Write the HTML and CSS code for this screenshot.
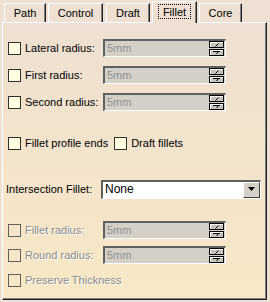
FILE: index.html
```html
<!DOCTYPE html>
<html>
<head>
    <title>Fillet</title>
    <link rel="stylesheet" href="styles.css">
</head>
<body>
<div id="window">
    <div id="tabs">
        <div class="tab tab-path">Path</div>
        <div class="tab tab-control">Control</div>
        <div class="tab tab-draft">Draft</div>
        <div class="tab tab-fillet active"><span class="focus">Fillet</span></div>
        <div class="tab tab-core">Core</div>
    </div>
    <div id="panel">
        <div class="row">
            <span class="check"></span>
            <span class="label">Lateral radius:</span>
            <div class="spin">
                <div class="spin-field">5mm</div>
                <div class="spin-buttons">
                    <div class="spin-btn"><svg width="13" height="5" viewBox="0 0 13 5"><path d="M5.5 4.5 L8.5 1.5" stroke="#000" fill="none"/></svg></div>
                    <div class="spin-btn"><svg width="13" height="5" viewBox="0 0 13 5"><path d="M3 1.5 H10 M8.5 1.5 L6.5 4" stroke="#000" fill="none"/></svg></div>
                </div>
            </div>
        </div>
        <div class="row">
            <span class="check"></span>
            <span class="label">First radius:</span>
            <div class="spin">
                <div class="spin-field">5mm</div>
                <div class="spin-buttons">
                    <div class="spin-btn"><svg width="13" height="5" viewBox="0 0 13 5"><path d="M5.5 4.5 L8.5 1.5" stroke="#000" fill="none"/></svg></div>
                    <div class="spin-btn"><svg width="13" height="5" viewBox="0 0 13 5"><path d="M3 1.5 H10 M8.5 1.5 L6.5 4" stroke="#000" fill="none"/></svg></div>
                </div>
            </div>
        </div>
        <div class="row">
            <span class="check"></span>
            <span class="label">Second radius:</span>
            <div class="spin">
                <div class="spin-field">5mm</div>
                <div class="spin-buttons">
                    <div class="spin-btn"><svg width="13" height="5" viewBox="0 0 13 5"><path d="M5.5 4.5 L8.5 1.5" stroke="#000" fill="none"/></svg></div>
                    <div class="spin-btn"><svg width="13" height="5" viewBox="0 0 13 5"><path d="M3 1.5 H10 M8.5 1.5 L6.5 4" stroke="#000" fill="none"/></svg></div>
                </div>
            </div>
        </div>

        <div class="row row-options">
            <span class="check"></span>
            <span class="label-inline">Fillet profile ends</span>
            <span class="check check-gap"></span>
            <span class="label-inline">Draft fillets</span>
        </div>

        <div class="row row-combo">
            <span class="label label-combo">Intersection Fillet:</span>
            <div class="combo">
                <div class="combo-value">None</div>
                <div class="combo-btn"><svg width="9" height="5" viewBox="0 0 9 5"><path d="M1 0 H8 L4.5 4 Z" fill="#000"/></svg></div>
            </div>
        </div>

        <div class="row row-fillet disabled">
            <span class="check"></span>
            <span class="label">Fillet radius:</span>
            <div class="spin">
                <div class="spin-field">5mm</div>
                <div class="spin-buttons">
                    <div class="spin-btn"><svg width="13" height="5" viewBox="0 0 13 5"><path d="M5.5 4.5 L8.5 1.5" stroke="#000" fill="none"/></svg></div>
                    <div class="spin-btn"><svg width="13" height="5" viewBox="0 0 13 5"><path d="M3 1.5 H10 M8.5 1.5 L6.5 4" stroke="#000" fill="none"/></svg></div>
                </div>
            </div>
        </div>
        <div class="row row-round disabled">
            <span class="check"></span>
            <span class="label">Round radius:</span>
            <div class="spin">
                <div class="spin-field">5mm</div>
                <div class="spin-buttons">
                    <div class="spin-btn"><svg width="13" height="5" viewBox="0 0 13 5"><path d="M5.5 4.5 L8.5 1.5" stroke="#000" fill="none"/></svg></div>
                    <div class="spin-btn"><svg width="13" height="5" viewBox="0 0 13 5"><path d="M3 1.5 H10 M8.5 1.5 L6.5 4" stroke="#000" fill="none"/></svg></div>
                </div>
            </div>
        </div>
        <div class="row disabled">
            <span class="check"></span>
            <span class="label-inline">Preserve Thickness</span>
        </div>
    </div>
</div>
</body>
</html>
```

FILE: styles.css
```css
html, body {
    margin: 0px;
    padding: 0px;
    background-color: #eee0d2;
}

#window {
    width: 270px;
    height: 302px;
    font-family: "Liberation Sans", Arial, sans-serif;
    font-size: 11px;
    color: #000;
}

#tabs {
    display: flex;
    padding-top: 2px;
    padding-left: 4px;
    height: 20px;
    align-items: flex-end;
}

.tab {
    height: 19px;
    line-height: 18px;
    text-align: center;
    border-top: 1px solid #ffffff;
    border-left: 1px solid #ffffff;
    border-right: 1px solid #202020;
    box-shadow: inset -1px 0px 0px #808080;
    box-sizing: border-box;
    margin-right: 2px;
    font-size: 11px;
}

.tab-path { width: 42px; }
.tab-control { width: 55px; margin-right: 3px; }
.tab-draft { width: 44px; }
.tab-fillet { width: 45px; }
.tab-core { width: 43px; }

.tab.active {
    height: 22px;
    line-height: 20px;
    margin-bottom: -1px;
    background-color: #eee0d2;
    position: relative;
    z-index: 2;
}

.focus {
    border: 1px dotted #000;
    padding: 1px 4px 0px 4px;
}

#panel {
    height: 278px;
    margin-left: 2px;
    width: 265px;
    box-sizing: border-box;
    border-top: 1px solid #ffffff;
    border-left: 1px solid #ffffff;
    border-right: 1px solid #202020;
    border-bottom: 1px solid #202020;
    box-shadow: inset -1px -1px 0px #808080;
    background: linear-gradient(#eee0d2, #f3e4cc 50%, #f7e8c6);
    padding-left: 5px;
    padding-top: 16px;
}

.row {
    display: flex;
    align-items: center;
    height: 18px;
    margin-bottom: 9px;
}

.check {
    width: 11px;
    height: 11px;
    border: 1px solid #303030;
    background-color: #ffffe0;
    flex-shrink: 0;
}

.label {
    margin-left: 4px;
    width: 78px;
    white-space: nowrap;
}

.label-inline {
    margin-left: 4px;
    white-space: nowrap;
}

.check-gap {
    margin-left: 6px;
}

.spin {
    display: flex;
    width: 123px;
    height: 18px;
    box-sizing: border-box;
    border-top: 2px solid #606060;
    border-left: 2px solid #606060;
    border-bottom: 1px solid #ffffff;
    border-right: 1px solid #ffffff;
    background-color: #d4d0c8;
}

.spin-field {
    flex: 1;
    color: #909090;
    line-height: 14px;
    padding-left: 2px;
}

.spin-buttons {
    width: 15px;
    display: flex;
    flex-direction: column;
    gap: 1px;
    margin-right: 1px;
}

.spin-btn {
    height: 5px;
    background-color: #c8c4bc;
    border: 1px solid #000;
    box-shadow: inset 1px 1px 0px #ffffff;
    display: flex;
}

.row-options {
    margin-top: 23px;
    margin-bottom: 28px;
}

.label-combo {
    margin-left: 0px;
    width: 95px;
}

.row-combo {
    margin-left: -2px;
    margin-bottom: 23px;
}

.combo {
    display: flex;
    width: 160px;
    height: 19px;
    box-sizing: border-box;
    border-top: 2px solid #606060;
    border-left: 2px solid #606060;
    border-bottom: 1px solid #ffffff;
    border-right: 1px solid #ffffff;
    background-color: #ffffff;
}

.combo-value {
    flex: 1;
    line-height: 15px;
    padding-left: 2px;
    font-size: 12px;
}

.combo-btn {
    width: 15px;
    background-color: #d4d0c8;
    border-top: 1px solid #ffffff;
    border-left: 1px solid #ffffff;
    border-right: 1px solid #404040;
    border-bottom: 1px solid #404040;
    display: flex;
    align-items: center;
    justify-content: center;
}

.row-fillet, .row-round {
    margin-bottom: 7px;
}

.disabled .check {
    background-color: transparent;
    border-color: #606060;
}

.disabled .label, .disabled .label-inline {
    color: #8a8a8a;
    text-shadow: 1px 1px 0px #ffffff;
}
```
